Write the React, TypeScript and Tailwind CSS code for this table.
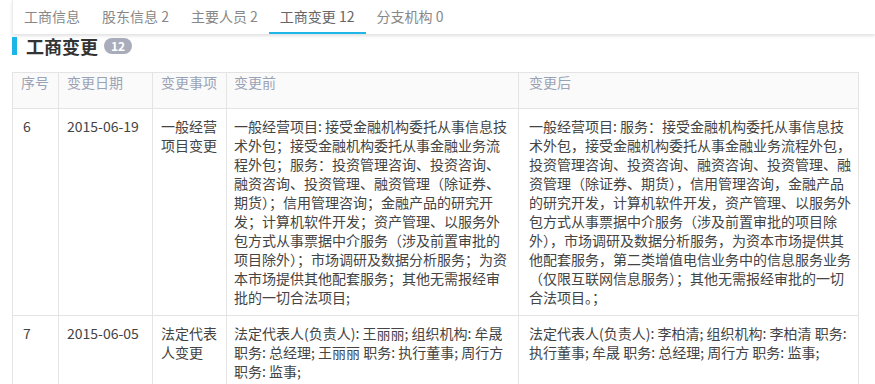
const TABS = [
  { label: '工商信息', active: false },
  { label: '股东信息 2', active: false },
  { label: '主要人员 2', active: false },
  { label: '工商变更 12', active: true },
  { label: '分支机构 0', active: false },
];

const ROWS = [
  {
    no: '6',
    date: '2015-06-19',
    item: '一般经营项目变更',
    before:
      '一般经营项目: 接受金融机构委托从事信息技术外包；接受金融机构委托从事金融业务流程外包；服务：投资管理咨询、投资咨询、融资咨询、投资管理、融资管理（除证券、期货）；信用管理咨询；金融产品的研究开发；计算机软件开发；资产管理、以服务外包方式从事票据中介服务（涉及前置审批的项目除外）；市场调研及数据分析服务；为资本市场提供其他配套服务；其他无需报经审批的一切合法项目;',
    after:
      '一般经营项目: 服务：接受金融机构委托从事信息技术外包，接受金融机构委托从事金融业务流程外包，投资管理咨询、投资咨询、融资咨询、投资管理、融资管理（除证券、期货），信用管理咨询，金融产品的研究开发，计算机软件开发，资产管理、以服务外包方式从事票据中介服务（涉及前置审批的项目除外），市场调研及数据分析服务，为资本市场提供其他配套服务，第二类增值电信业务中的信息服务业务（仅限互联网信息服务）；其他无需报经审批的一切合法项目。；',
  },
  {
    no: '7',
    date: '2015-06-05',
    item: '法定代表人变更',
    before: '法定代表人(负责人): 王丽丽; 组织机构: 牟晟 职务: 总经理; 王丽丽 职务: 执行董事; 周行方 职务: 监事;',
    after: '法定代表人(负责人): 李柏清; 组织机构: 李柏清 职务: 执行董事; 牟晟 职务: 总经理; 周行方 职务: 监事;',
  },
];

const cell = 'border border-[#e4e4e4] px-[8px] align-top';

export default function App() {
  return (
    <div
      className="w-[875px] h-[384px] overflow-hidden bg-white pl-[12px] pr-[17px]"
      style={{ fontFamily: '"Noto Sans CJK SC", "Liberation Sans", sans-serif' }}
    >
      {/* Tabs */}
      <div className="-mr-[17px] flex h-[34px] items-stretch bg-white border-l border-[#ececec] shadow-[0_2px_3px_rgba(0,0,0,0.12)]">
        {TABS.map((t) => (
          <div
            key={t.label}
            className={`flex items-center px-[11px] text-[14px] whitespace-nowrap ${t.active ? 'text-[#666] border-b-2 border-[#20b6e8]' : 'text-[#888] border-b-2 border-transparent'}`}
          >
            {t.label}
          </div>
        ))}
      </div>

      {/* Title */}
      <div className="flex items-center h-[18px] mt-[3px]">
        <div className="w-[5px] h-[18px] bg-[#1bb5e8]" />
        <span className="ml-[9px] text-[18px] font-bold text-[#333] leading-none">工商变更</span>
        <span className="ml-[6px] h-[16px] px-[7px] rounded-full bg-[#a9acba] text-white text-[12px] font-bold leading-[16px]">12</span>
      </div>

      {/* Table */}
      <table className="mt-[17px] w-[846px] table-fixed border-collapse text-[14px] text-[#444] leading-[19px]">
        <colgroup>
          <col className="w-[46px]" />
          <col className="w-[94px]" />
          <col className="w-[74px]" />
          <col className="w-[292px]" />
          <col className="w-[340px]" />
        </colgroup>
        <thead>
          <tr className="bg-[#fafafa] text-[#9aa3b5] text-left">
            <th className={`${cell} font-normal h-[36px] align-middle`}>序号</th>
            <th className={`${cell} font-normal align-middle`}>变更日期</th>
            <th className={`${cell} font-normal align-middle`}>变更事项</th>
            <th className={`${cell} font-normal align-middle pl-[7px]`}>变更前</th>
            <th className={`${cell} font-normal align-middle pl-[10px]`}>变更后</th>
          </tr>
        </thead>
        <tbody>
          {ROWS.map((r) => (
            <tr key={r.no}>
              <td className={`${cell} py-[8px] pl-[10px]`}>{r.no}</td>
              <td className={`${cell} py-[8px]`}>{r.date}</td>
              <td className={`${cell} py-[8px]`}>{r.item}</td>
              <td className={`${cell} py-[8px] pl-[7px] pr-[10px]`}>{r.before}</td>
              <td className={`${cell} py-[8px] pl-[10px] pr-[3px]`}>{r.after}</td>
            </tr>
          ))}
        </tbody>
      </table>
    </div>
  );
}
